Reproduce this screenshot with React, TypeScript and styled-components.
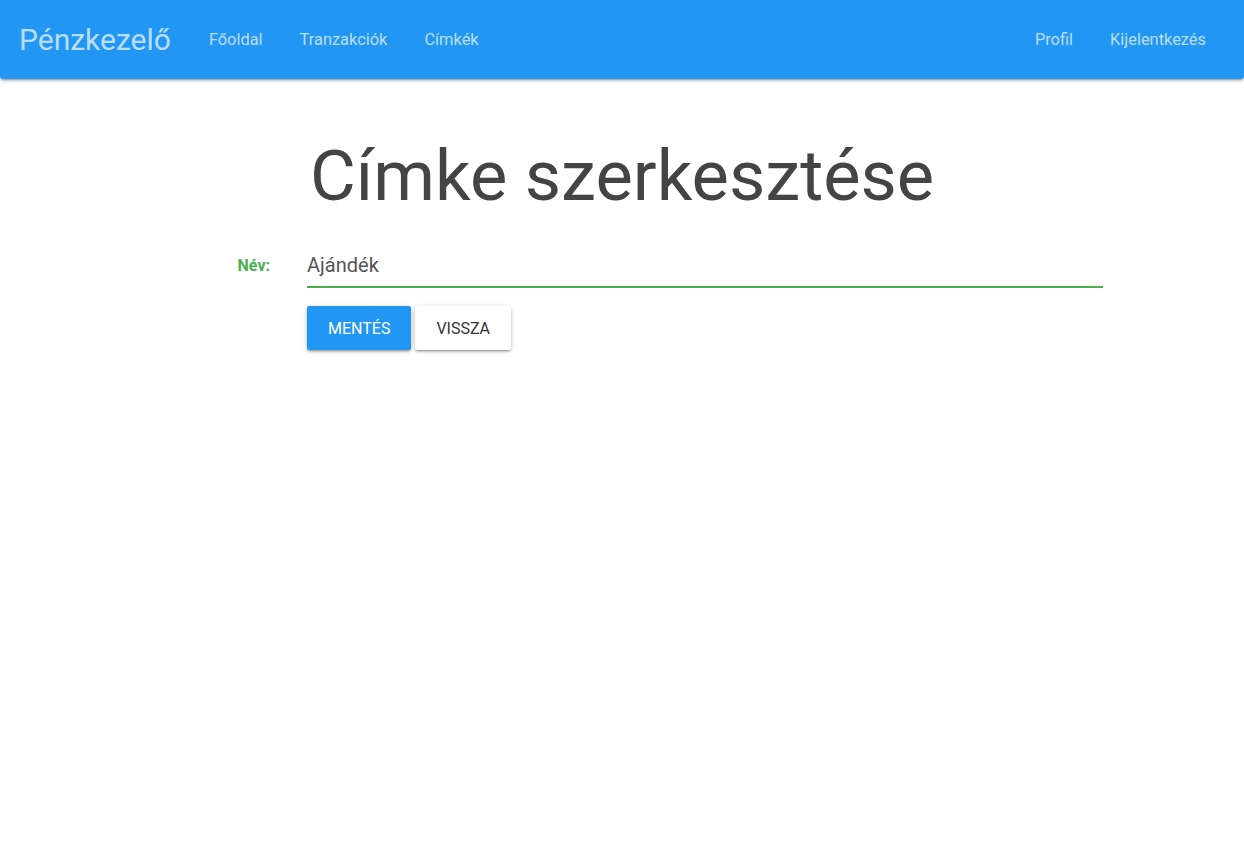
import React from "react";
import styled, { createGlobalStyle } from "styled-components";

const Global = createGlobalStyle`
  html, body { margin: 0; padding: 0; background: #fff; }
  body { font-family: Roboto, "Noto Sans", sans-serif; color: rgba(0,0,0,0.87); }
  * { box-sizing: border-box; }
`;

const Nav = styled.nav`
  height: 79px;
  background: #2196f3;
  border-radius: 0 0 3px 3px;
  box-shadow: 0 2px 2px 0 rgba(0,0,0,0.14), 0 3px 1px -2px rgba(0,0,0,0.12), 0 1px 5px 0 rgba(0,0,0,0.2);
  display: flex;
  align-items: center;
  padding: 0 19.5px 0 19px;
`;

const Brand = styled.a`
  font-size: 30px;
  color: rgba(255,255,255,0.7);
  text-decoration: none;
  margin-right: 19.5px;
`;

const Links = styled.div<{ $right?: boolean }>`
  display: flex;
  align-items: center;
  margin-left: ${(p) => (p.$right ? "auto" : "0")};
`;

const NavLink = styled.a`
  font-size: 16.4px;
  color: rgba(255,255,255,0.7);
  text-decoration: none;
  padding: 0 18.5px;
`;

const Main = styled.main`
  display: grid;
  grid-template-columns: 166px 1fr;
  padding: 0 141px;
`;

const Title = styled.h1`
  grid-column: 2;
  margin: 47px 0 18px;
  padding-left: 3px;
  font-weight: 400;
  font-size: 70.4px;
  line-height: 100px;
  color: #444;
`;

const Label = styled.label`
  grid-column: 1;
  justify-self: end;
  padding-right: 37px;
  padding-top: 12px;
  font-size: 16px;
  font-weight: 700;
  color: #4caf50;
`;

const Input = styled.input`
  grid-column: 2;
  border: none;
  border-bottom: 2px solid #4caf50;
  outline: none;
  height: 44px;
  padding: 0;
  font-family: Roboto, sans-serif;
  font-size: 20px;
  color: #555;
  background: transparent;
`;

const Actions = styled.div`
  grid-column: 2;
  display: flex;
  gap: 4px;
  margin-top: 18px;
  padding-bottom: 10px;
`;

const Button = styled.button<{ $primary?: boolean }>`
  height: 44px;
  padding: 0 21px;
  border: none;
  border-radius: 2px;
  font-family: Roboto, sans-serif;
  font-size: 16px;
  text-transform: uppercase;
  background: ${(p) => (p.$primary ? "#2196f3" : "#fff")};
  color: ${(p) => (p.$primary ? "#fff" : "#343434")};
  box-shadow: 0 2px 2px 0 rgba(0,0,0,0.14), 0 3px 1px -2px rgba(0,0,0,0.12), 0 1px 5px 0 rgba(0,0,0,0.2);
  cursor: pointer;
`;

export default function App() {
  return (
    <>
      <Global />
      <Nav>
        <Brand href="#">Pénzkezelő</Brand>
        <Links>
          <NavLink href="#">Főoldal</NavLink>
          <NavLink href="#">Tranzakciók</NavLink>
          <NavLink href="#">Címkék</NavLink>
        </Links>
        <Links $right>
          <NavLink href="#">Profil</NavLink>
          <NavLink href="#">Kijelentkezés</NavLink>
        </Links>
      </Nav>
      <Main>
        <Title>Címke szerkesztése</Title>
        <Label htmlFor="nev">Név:</Label>
        <Input id="nev" defaultValue="Ajándék" />
        <Actions>
          <Button $primary>Mentés</Button>
          <Button>Vissza</Button>
        </Actions>
      </Main>
    </>
  );
}
